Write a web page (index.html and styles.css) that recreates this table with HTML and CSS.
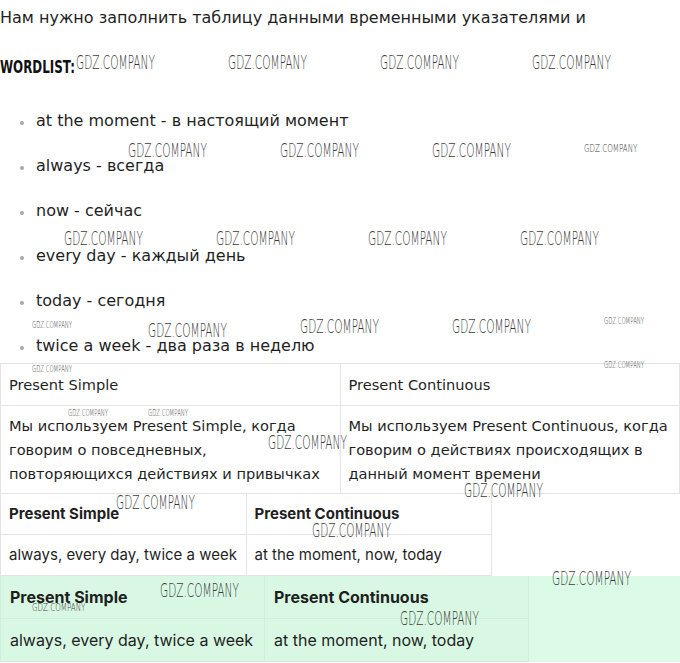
FILE: index.html
```html
<!DOCTYPE html>
<html lang="ru">
<head>
<meta charset="utf-8">
<link rel="stylesheet" href="styles.css">
</head>
<body>
<div class="page">
  <p class="intro">Нам нужно заполнить таблицу данными временными указателями и</p>
  <p class="wordlist"><span class="wl">WORDLIST:</span></p>
  <ul class="words">
    <li>at the moment - в настоящий момент</li>
    <li>always - всегда</li>
    <li>now - сейчас</li>
    <li>every day - каждый день</li>
    <li>today - сегодня</li>
    <li>twice a week - два раза в неделю</li>
  </ul>
  <table class="t1">
    <tr class="head"><td>Present Simple</td><td>Present Continuous</td></tr>
    <tr class="body"><td>Мы используем Present Simple, когда говорим о повседневных, повторяющихся действиях и привычках</td><td>Мы используем Present Continuous, когда говорим о действиях происходящих в данный момент времени</td></tr>
  </table>
  <div class="row2">
    <table class="t2">
      <tr class="head"><th>Present Simple</th><th>Present Continuous</th></tr>
      <tr><td>always, every day, twice a week</td><td>at the moment, now, today</td></tr>
    </table>
  </div>
  <div class="row3">
    <table class="t3">
      <tr class="head"><th>Present Simple</th><th>Present Continuous</th></tr>
      <tr><td>always, every day, twice a week</td><td>at the moment, now, today</td></tr>
    </table>
  </div>

  <div class="marks">
    <span class="wm big" style="left:76px;top:53px">GDZ.COMPANY</span>
    <span class="wm big" style="left:228px;top:53px">GDZ.COMPANY</span>
    <span class="wm big" style="left:380px;top:53px">GDZ.COMPANY</span>
    <span class="wm big" style="left:532px;top:53px">GDZ.COMPANY</span>
    <span class="wm big" style="left:128px;top:141px">GDZ.COMPANY</span>
    <span class="wm big" style="left:280px;top:141px">GDZ.COMPANY</span>
    <span class="wm big" style="left:432px;top:141px">GDZ.COMPANY</span>
    <span class="wm mid" style="left:584px;top:143px">GDZ.COMPANY</span>
    <span class="wm big" style="left:64px;top:229px">GDZ.COMPANY</span>
    <span class="wm big" style="left:216px;top:229px">GDZ.COMPANY</span>
    <span class="wm big" style="left:368px;top:229px">GDZ.COMPANY</span>
    <span class="wm big" style="left:520px;top:229px">GDZ.COMPANY</span>
    <span class="wm tiny" style="left:32px;top:322px">GDZ.COMPANY</span>
    <span class="wm big" style="left:148px;top:321px">GDZ.COMPANY</span>
    <span class="wm big" style="left:300px;top:317px">GDZ.COMPANY</span>
    <span class="wm big" style="left:452px;top:317px">GDZ.COMPANY</span>
    <span class="wm tiny" style="left:604px;top:318px">GDZ.COMPANY</span>
    <span class="wm tiny" style="left:32px;top:366px">GDZ.COMPANY</span>
    <span class="wm tiny" style="left:604px;top:362px">GDZ.COMPANY</span>
    <span class="wm tiny" style="left:68px;top:410px">GDZ.COMPANY</span>
    <span class="wm tiny" style="left:148px;top:410px">GDZ.COMPANY</span>
    <span class="wm big" style="left:268px;top:433px">GDZ.COMPANY</span>
    <span class="wm big" style="left:464px;top:481px">GDZ.COMPANY</span>
    <span class="wm big" style="left:116px;top:493px">GDZ.COMPANY</span>
    <span class="wm big" style="left:312px;top:521px">GDZ.COMPANY</span>
    <span class="wm big" style="left:552px;top:569px">GDZ.COMPANY</span>
    <span class="wm big" style="left:160px;top:581px">GDZ.COMPANY</span>
    <span class="wm mid" style="left:32px;top:602px">GDZ.COMPANY</span>
    <span class="wm big" style="left:400px;top:609px">GDZ.COMPANY</span>
  </div>
</div>
</body>
</html>
```

FILE: styles.css
```css
html, body {
  margin: 0;
  padding: 0;
  background: #fff;
}
.page {
  position: relative;
  width: 680px;
  font-family: "DejaVu Sans", "Noto Sans", sans-serif;
  font-size: 16px;
  color: #1f1f1f;
}
.intro {
  margin: 0;
  padding-top: 6px;
  line-height: 24px;
}
.wordlist {
  margin: 24px 0 0;
  height: 26px;
  line-height: 26px;
}
.wl {
  display: inline-block;
  font-family: "DejaVu Sans", sans-serif;
  font-weight: bold;
  font-size: 18px;
  color: #111;
  transform: scaleX(0.66);
  transform-origin: 0 50%;
}
.words {
  list-style: none;
  margin: 29px 0 0;
  padding: 0 0 0 36px;
}
.words li {
  position: relative;
  line-height: 24px;
  margin-bottom: 21px;
}
.words li:last-child {
  margin-bottom: 5px;
}
.words li::before {
  content: "";
  position: absolute;
  left: -16px;
  top: 12px;
  width: 4px;
  height: 4px;
  border-radius: 50%;
  background: #a8a8a8;
}
table {
  border-collapse: collapse;
}
td, th {
  border: 1px solid #e4e4e4;
  text-align: left;
  vertical-align: middle;
  padding: 0 8px;
  line-height: 24px;
}
.t1 {
  width: 680px;
  table-layout: fixed;
  font-size: 14.6px;
}
.t1 .head td {
  height: 41px;
}
.t1 .body td {
  height: 86px;
  padding-top: 1px;
}
.row2 {
  display: flex;
}
.t2, .t3 {
  font-family: "Inter", "Noto Sans", sans-serif;
}
.t2 {
  width: 492px;
  table-layout: fixed;
  font-size: 15px;
}
.t2 th {
  font-weight: 700;
  height: 40px;
  border-top: none;
}
.t2 td {
  height: 40px;
}
.row3 {
  background: #dcfbe7;
}
.t3 {
  width: 529px;
  table-layout: fixed;
  font-size: 16px;
  background: #d9f8e4;
}
.t3 th, .t3 td {
  border-color: #cdeed8;
  padding: 0 9px;
}
.t3 th {
  border-top: none;
  font-weight: 700;
  height: 42px;
}
.t3 td {
  height: 42px;
}
.marks {
  position: absolute;
  inset: 0;
  pointer-events: none;
}
.wm {
  position: absolute;
  white-space: nowrap;
  font-family: "DejaVu Sans", sans-serif;
  font-weight: 200;
  color: #3a3a3a;
  transform-origin: 0 0;
  line-height: 1;
}
.wm.big {
  font-size: 19px;
  transform: scaleX(0.555);
}
.wm.mid {
  font-size: 11px;
  transform: scaleX(0.65);
}
.wm.tiny {
  font-size: 8px;
  transform: scaleX(0.67);
}
```
